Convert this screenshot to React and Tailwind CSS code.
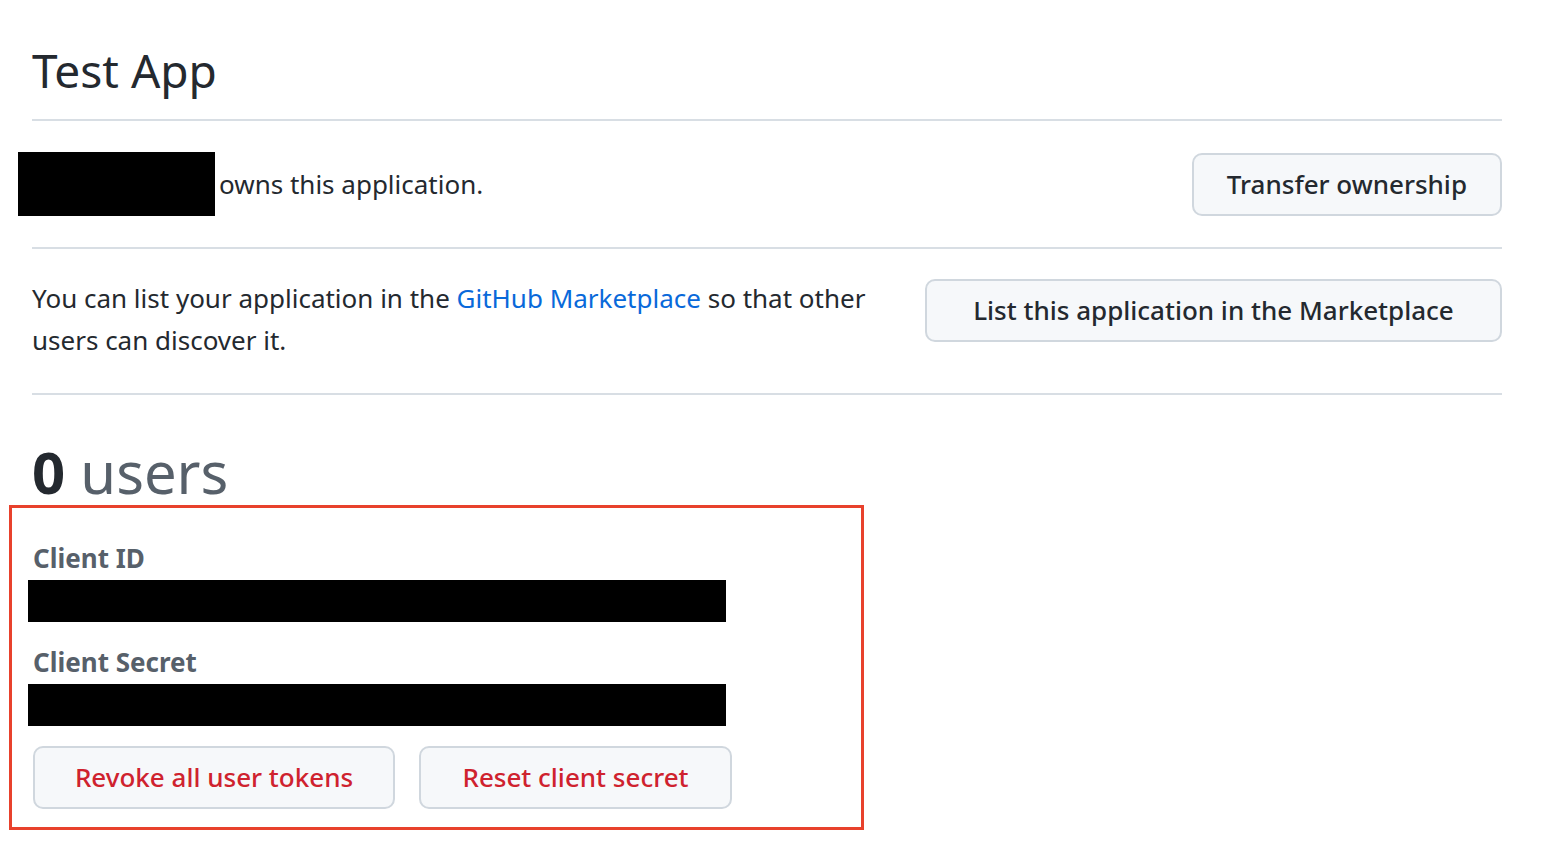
export default function App() {
  return (
    <div className="w-[1552px] h-[846px] bg-white text-[#24292f] font-['Liberation_Sans'] overflow-hidden">
      <div className="ml-[32px] w-[1470px]">
        <h1 className="pt-[42px] h-[121px] text-[46px] leading-[56px] border-b-2 border-[#d8dee4]">Test App</h1>
        <div className="flex items-center justify-between h-[128px] border-b-2 border-[#d8dee4]">
          <div className="flex items-center -ml-[14px]">
            <div className="w-[197px] h-[64px] bg-black" />
            <span className="ml-[4px] text-[26px]">owns this application.</span>
          </div>
          <button className="h-[63px] px-[33px] rounded-[10px] border-2 border-[#d0d7de] bg-[#f6f8fa] text-[26px] font-medium">Transfer ownership</button>
        </div>
        <div className="flex items-start h-[146px] pt-[30px] border-b-2 border-[#d8dee4]">
          <p className="flex-1 pr-[12px] text-[26px] leading-[42px] -mt-[2px]">
            You can list your application in the <span className="text-[#0969da]">GitHub Marketplace</span> so that other users can discover it.
          </p>
          <button className="shrink-0 w-[577px] h-[63px] rounded-[10px] border-2 border-[#d0d7de] bg-[#f6f8fa] text-[26px] font-medium">List this application in the Marketplace</button>
        </div>
        <div className="pt-[42px] text-[58px] leading-[70px]">
          <span className="font-bold">0</span> <span className="text-[#57606a]">users</span>
        </div>
      </div>
      <div className="ml-[9px] mt-[-2px] w-[855px] h-[325px] border-[3px] border-[#e8412c] pl-[16px] pt-[34px]">
        <div className="ml-[5px] text-[26px] font-bold text-[#57606a] leading-[32px]">Client ID</div>
        <div className="mt-[6px] w-[698px] h-[42px] bg-black" />
        <div className="ml-[5px] mt-[24px] text-[26px] font-bold text-[#57606a] leading-[32px]">Client Secret</div>
        <div className="mt-[6px] w-[698px] h-[42px] bg-black" />
        <div className="ml-[5px] mt-[20px] flex gap-[24px]">
          <button className="w-[362px] h-[63px] rounded-[10px] border-2 border-[#d0d7de] bg-[#f6f8fa] text-[26px] font-medium text-[#cf222e]">Revoke all user tokens</button>
          <button className="w-[313px] h-[63px] rounded-[10px] border-2 border-[#d0d7de] bg-[#f6f8fa] text-[26px] font-medium text-[#cf222e]">Reset client secret</button>
        </div>
      </div>
    </div>
  );
}
